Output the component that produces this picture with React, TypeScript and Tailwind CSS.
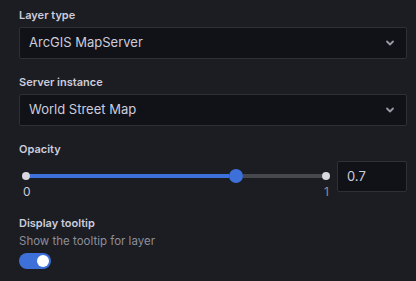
import React from 'react';

const Chevron = () => (
  <svg width="16" height="16" viewBox="0 0 16 16" className="text-[#9a9aa6]">
    <path d="M5 6.5 L8 9.5 L11 6.5" fill="none" stroke="currentColor" strokeWidth="1.8" strokeLinecap="round" strokeLinejoin="round" />
  </svg>
);

const Select = ({ value }: { value: string }) => (
  <div className="h-[32px] flex items-center justify-between rounded-[2px] border border-[#2e3036] bg-[#111217] pl-[9px] pr-[8px]">
    <span className="text-[13px] text-[#ccccdc]">{value}</span>
    <Chevron />
  </div>
);

const Label = ({ children }: { children: React.ReactNode }) => (
  <div className="text-[11px] leading-[15px] font-semibold text-[#ccccdc] mb-[4px]">{children}</div>
);

const Dot = () => <div className="w-[8px] h-[8px] shrink-0 rounded-full bg-[#d8d9e0]" />;

export default function App() {
  const value = 0.7;
  return (
    <div
      className="w-[416px] h-[281px] bg-[#1b1d22] pl-[19px] pr-[9px] pt-[8px] flex flex-col overflow-hidden"
      style={{ fontFamily: 'Inter, "Noto Sans", sans-serif' }}
    >
      <div>
        <Label>Layer type</Label>
        <Select value="ArcGIS MapServer" />
      </div>

      <div className="mt-[16px]">
        <Label>Server instance</Label>
        <Select value="World Street Map" />
      </div>

      <div className="mt-[16px]">
        <Label>Opacity</Label>
        <div className="flex items-start">
          <div className="flex-1 flex flex-col px-[3px] pt-[8px]">
            <div className="flex items-center h-[14px]">
              <Dot />
              <div
                className="h-[4px] bg-[#3d71d9] shrink-0"
                style={{ width: `calc((100% - 8px) * ${value} - 11px)` }}
              />
              <div className="w-[14px] h-[14px] shrink-0 rounded-full bg-[#3d71d9]" />
              <div className="h-[4px] flex-1 bg-[#46484e]" />
              <Dot />
            </div>
            <div className="flex justify-between px-[1px] mt-[1px] text-[12px] leading-[15px]">
              <span className="text-[#ccccdc]">0</span>
              <span className="text-[#8e8e9a]">1</span>
            </div>
          </div>
          <div className="ml-[4px] w-[70px] h-[31px] flex items-center rounded-[2px] border border-[#2e3036] bg-[#111217] pl-[9px]">
            <span className="text-[13px] text-[#ccccdc]">0.7</span>
          </div>
        </div>
      </div>

      <div className="mt-[17px]">
        <div className="text-[11px] leading-[15px] font-semibold text-[#ccccdc]">Display tooltip</div>
        <div className="text-[11.5px] leading-[15px] text-[#8e8e9a] mt-[3px]">Show the tooltip for layer</div>
        <div className="mt-[4px] w-[32px] h-[16px] rounded-full bg-[#3d71d9] flex items-center justify-end px-[2px]">
          <div className="w-[12px] h-[12px] rounded-full bg-white" />
        </div>
      </div>
    </div>
  );
}
